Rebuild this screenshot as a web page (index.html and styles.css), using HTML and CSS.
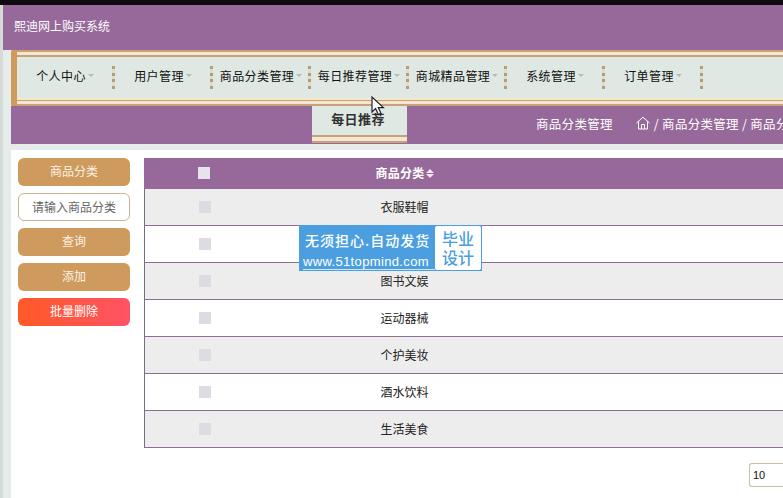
FILE: index.html
```html
<!DOCTYPE html>
<html lang="zh-CN">

<head>
    <meta charset="UTF-8">
    <title>熙迪网上购买系统</title>
    <link rel="stylesheet" href="styles.css">
</head>

<body>
    <div class="topline"></div>
    <div class="page">
        <header class="brand">熙迪网上购买系统</header>

        <div class="main">
            <!-- 导航 -->
            <nav class="nav">
                <div class="nav-inner">
                    <div class="nav-item">个人中心<i class="caret"></i></div>
                    <div class="nav-item">用户管理<i class="caret"></i></div>
                    <div class="nav-item">商品分类管理<i class="caret"></i></div>
                    <div class="nav-item">每日推荐管理<i class="caret"></i></div>
                    <div class="nav-item">商城精品管理<i class="caret"></i></div>
                    <div class="nav-item">系统管理<i class="caret"></i></div>
                    <div class="nav-item">订单管理<i class="caret"></i></div>
                </div>
            </nav>

            <!-- 标题栏 -->
            <div class="subbar">
                <div class="tab">每日推荐</div>
                <div class="crumbs">
                    <span class="crumb-title">商品分类管理</span>
                    <svg class="home" viewBox="0 0 14 14" width="14" height="14">
                        <path d="M.5 7 7 1.2 13.5 7M2.5 5.5V13H11.5V5.5M5.5 13V8.5H8.5V13" fill="none" stroke="#fff" stroke-width="1"/>
                    </svg>
                    <span class="crumb-path">/ 商品分类管理 / 商品分类</span>
                </div>
            </div>

            <div class="content">
                <!-- 搜索栏 -->
                <aside class="side">
                    <div class="btn">商品分类</div>
                    <div class="search">请输入商品分类</div>
                    <div class="btn">查询</div>
                    <div class="btn">添加</div>
                    <div class="btn btn-danger">批量删除</div>
                </aside>

                <!-- 列表 -->
                <section class="list">
                    <div class="row row-head">
                        <div class="cell-check"><i class="check"></i></div>
                        <div class="cell-name">商品分类<span class="sort"><i class="sort-up"></i><i class="sort-down"></i></span></div>
                    </div>
                    <div class="row row-grey">
                        <div class="cell-check"><i class="check"></i></div>
                        <div class="cell-name">衣服鞋帽</div>
                    </div>
                    <div class="row">
                        <div class="cell-check"><i class="check"></i></div>
                        <div class="cell-name"></div>
                    </div>
                    <div class="row row-grey">
                        <div class="cell-check"><i class="check"></i></div>
                        <div class="cell-name">图书文娱</div>
                    </div>
                    <div class="row">
                        <div class="cell-check"><i class="check"></i></div>
                        <div class="cell-name">运动器械</div>
                    </div>
                    <div class="row row-grey">
                        <div class="cell-check"><i class="check"></i></div>
                        <div class="cell-name">个护美妆</div>
                    </div>
                    <div class="row">
                        <div class="cell-check"><i class="check"></i></div>
                        <div class="cell-name">酒水饮料</div>
                    </div>
                    <div class="row row-grey">
                        <div class="cell-check"><i class="check"></i></div>
                        <div class="cell-name">生活美食</div>
                    </div>
                    <div class="pager"><div class="page-size">10</div></div>
                </section>
            </div>
        </div>
    </div>

    <!-- 水印 -->
    <div class="stamp">
        <div class="stamp-text">
            <div class="stamp-slogan">无须担心.自动发货</div>
            <div class="stamp-url">www.51topmind.com</div>
        </div>
        <div class="stamp-tag">毕业<br>设计</div>
    </div>

    <!-- 鼠标 -->
    <svg class="cursor" viewBox="0 0 14 20" width="14" height="20">
        <path d="M1 1V16L4.6 12.6 7.4 18.6 10 17.4 7.3 11.6H12.4Z" fill="#fff" stroke="#1c2330" stroke-width="1.2"/>
    </svg>
</body>

</html>
```

FILE: styles.css
```css
html,
body {
    margin: 0;
    padding: 0;
    width: 783px;
    height: 498px;
    overflow: hidden;
}

body {
    position: relative;
    background-color: #d5dbd9;
    font-family: "Noto Sans CJK SC", "Liberation Sans", sans-serif;
    font-size: 12px;
    color: #222;
}

.topline {
    height: 5px;
    background-color: #0f0a12;
}

.page {
    margin-left: 3px;
    background-color: #e6ece9;
    height: 493px;
}

.brand {
    height: 45px;
    padding-left: 11px;
    line-height: 42px;
    background-color: #96699a;
    color: #fff;
    font-size: 12px;
}

.main {
    margin-left: 8px;
}

/* 导航 */
.nav {
    height: 56px;
    box-sizing: border-box;
    padding: 7px 0 8px 6px;
    border-radius: 2px 0 0 2px;
    background: linear-gradient(#c8a080 0 2px, #f3e8cc 2px 5px, #c8a080 5px 7px, #f3e8cc 48px 50px, #c8a080 50px 51px, #f3e8cc 51px 54px, #c8a080 54px 56px);
    box-shadow: inset 6px 0 0 #cf9a5e;
}

.nav-inner {
    display: flex;
    height: 41px;
    background-color: #dfe8e3;
}

.nav-item {
    width: 98px;
    flex: none;
    display: flex;
    align-items: center;
    justify-content: center;
    gap: 2px;
    height: 23px;
    margin-top: 9px;
    padding: 0 2px 5px 0;
    box-sizing: border-box;
    color: #111;
    letter-spacing: 0.4px;
    white-space: nowrap;
    background: repeating-linear-gradient(#ab9f85 0 3px, #e8dcc0 3px 6.6px) right top / 3px 100% no-repeat;
}

.caret {
    width: 0;
    height: 0;
    border: 3px solid transparent;
    border-top-color: #b4bcb8;
    margin-top: 3px;
}

/* 标题栏 */
.subbar {
    display: flex;
    height: 38px;
    background-color: #96699a;
    color: #fff;
}

.tab {
    flex: none;
    width: 95px;
    height: 37px;
    box-sizing: border-box;
    margin-left: 301px;
    padding: 3px 3px 0 0;
    text-align: center;
    font-size: 13px;
    font-weight: bold;
    letter-spacing: 0.4px;
    color: #333;
    line-height: 19px;
    background: linear-gradient(#dfe8e3 0 29px, #c8a080 29px 31px, #f3e8cc 31px 35px, #c8a080 35px 37px);
}

.crumbs {
    display: flex;
    align-items: center;
    margin-left: 129px;
    padding-bottom: 4px;
    white-space: nowrap;
    font-size: 12.5px;
    letter-spacing: 0.3px;
}

.crumb-title {
    margin-right: 23px;
}

.home {
    margin-right: 4px;
}

/* 内容 */
.content {
    display: flex;
    height: 348px;
    margin-top: 6px;
    background-color: #fff;
}

.side {
    width: 112px;
    flex: none;
    margin-left: 7px;
    padding-top: 8px;
}

.btn {
    height: 28px;
    margin-bottom: 7px;
    line-height: 26px;
    text-align: center;
    background-color: #cf9a5e;
    color: #fbf3e4;
    border-radius: 6px;
}

.btn-danger {
    background: linear-gradient(90deg, #ff5a26, #ff5266);
    color: #fff;
    margin-bottom: 0;
}

.search {
    height: 28px;
    margin-bottom: 7px;
    box-sizing: border-box;
    line-height: 25px;
    text-align: center;
    border: 1px solid #c8b594;
    border-radius: 6px;
    color: #666;
    background-color: #fff;
}

/* 列表 */
.list {
    flex: none;
    width: 639px;
    margin-left: 14px;
    padding-top: 8px;
}

.row {
    display: flex;
    height: 37px;
    align-items: center;
    box-sizing: border-box;
    border-left: 1px solid #7d6b82;
    border-bottom: 1px solid #8b6f90;
    background-color: #fff;
    color: #222;
}

.row-grey {
    background-color: #ededed;
}

.row-head {
    height: 31px;
    border: 0;
    background-color: #96699a;
    color: #fff;
    font-weight: bold;
    letter-spacing: 0.3px;
}

.cell-check {
    width: 119px;
    flex: none;
    display: flex;
    justify-content: center;
}

.cell-name {
    width: 281px;
    flex: none;
    padding-bottom: 1px;
    text-align: center;
}

.row-head .cell-name {
    display: flex;
    justify-content: center;
    align-items: center;
    gap: 1px;
    padding: 0 0 2px 1px;
}

.check {
    display: block;
    width: 12px;
    height: 12px;
    background-color: #dcdde2;
}

.row-head .check {
    background-color: #e6e4ea;
    margin-top: -1px;
}

.sort {
    display: flex;
    flex-direction: column;
    gap: 1px;
    margin-top: 2px;
}

.sort-up,
.sort-down {
    display: block;
    width: 0;
    height: 0;
    border-left: 4px solid transparent;
    border-right: 4px solid transparent;
}

.sort-up {
    border-bottom: 4px solid #f1e6f2;
}

.sort-down {
    border-top: 4px solid #f1e6f2;
}

.pager {
    display: flex;
    justify-content: flex-end;
    padding-top: 15px;
}

.page-size {
    width: 34px;
    height: 24px;
    box-sizing: border-box;
    padding-left: 3px;
    line-height: 22px;
    border: 1px solid #c8bfa5;
    border-right: 0;
    border-radius: 3px 0 0 3px;
    color: #111;
    font-size: 11px;
    font-family: "Liberation Sans", sans-serif;
}

/* 水印 */
.stamp {
    position: absolute;
    left: 299px;
    top: 225px;
    width: 183px;
    height: 46px;
    display: flex;
    background-color: #4b9fe0;
    color: #fff;
}

.stamp-text {
    flex: none;
    width: 136px;
    padding-left: 6px;
    box-sizing: border-box;
}

.stamp-slogan {
    font-size: 14px;
    font-weight: 500;
    line-height: 21px;
    margin-top: 5px;
    white-space: nowrap;
    letter-spacing: 1px;
}

.stamp-url {
    font-size: 13px;
    font-family: "Liberation Sans", sans-serif;
    line-height: 15px;
    margin-top: 3px;
    margin-left: -2px;
    white-space: nowrap;
    letter-spacing: 0.35px;
    border-bottom: 1px solid #cfe6f7;
}

.stamp-tag {
    flex: none;
    width: 46px;
    height: 44px;
    margin-top: 1px;
    background-color: #fff;
    color: #4b9fe0;
    font-size: 16px;
    font-weight: 500;
    line-height: 19px;
    text-align: center;
    border-radius: 2px;
    padding-top: 3px;
    box-sizing: border-box;
}

.cursor {
    position: absolute;
    left: 371px;
    top: 96px;
}
```
